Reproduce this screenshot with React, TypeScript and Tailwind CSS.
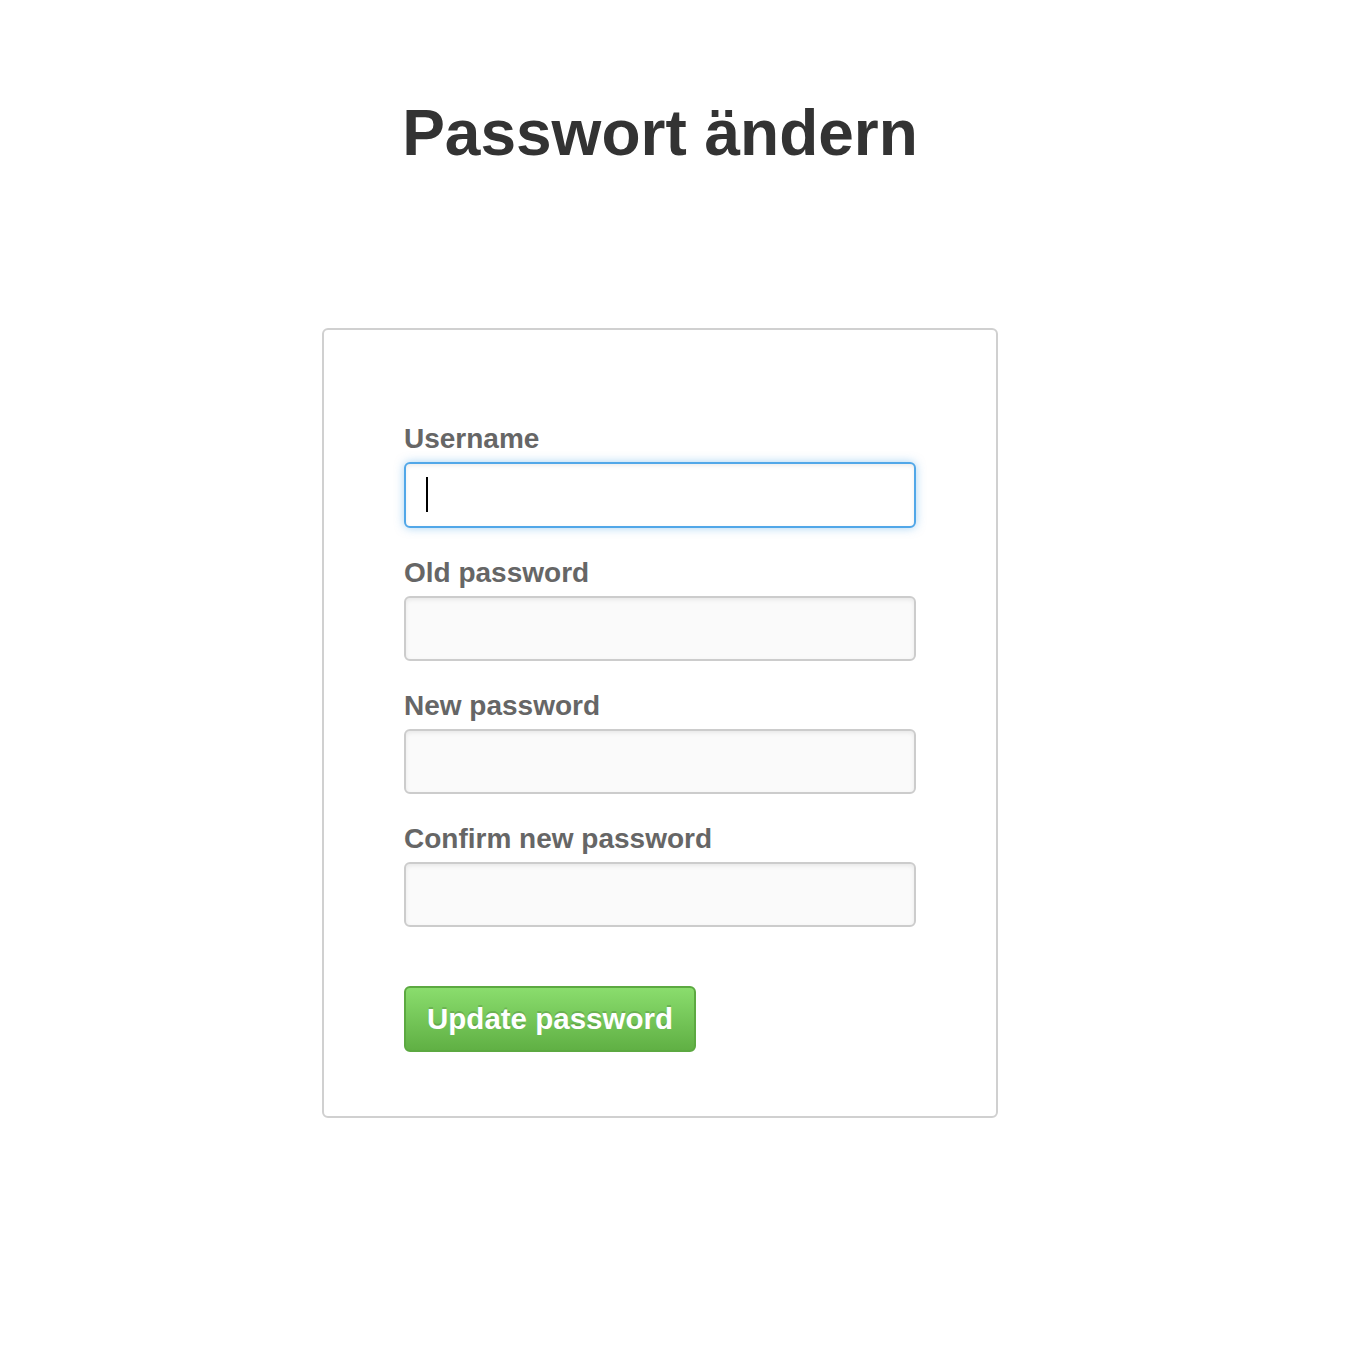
import React from 'react';

const fields = ['Username', 'Old password', 'New password', 'Confirm new password'];

function Field({ label, focused }: { label: string; focused?: boolean }) {
  return (
    <div className="flex flex-col">
      <label className="text-[28px] leading-[32px] font-bold text-[#666] mb-[7px]">{label}</label>
      <div className="relative">
        <input
          type={label === 'Username' ? 'text' : 'password'}
          className={
            focused
              ? 'w-[512px] h-[66px] rounded-[6px] border-2 border-[#51a7e8] bg-white outline-none shadow-[inset_0_2px_4px_rgba(0,0,0,0.075),0_0_10px_rgba(81,167,232,0.5)]'
              : 'w-[512px] h-[65px] rounded-[6px] border-2 border-[#cccccc] bg-[#fafafa] outline-none shadow-[inset_0_2px_4px_rgba(0,0,0,0.075)]'
          }
        />
        {focused && <span className="absolute left-[22px] top-[15px] w-[2px] h-[35px] bg-black" />}
      </div>
    </div>
  );
}

export default function App() {
  return (
    <div className="w-[1320px] min-h-[1360px] bg-white flex flex-col items-center font-['Liberation_Sans',Arial,sans-serif]">
      <h1 className="mt-[96px] text-[64px] leading-[74px] font-bold text-[#333]">Passwort ändern</h1>

      <div className="mt-[158px] w-[676px] border-2 border-[#d0d0d0] rounded-[6px] px-[80px] pt-[93px] pb-[64px] flex flex-col">
        <div className="flex flex-col gap-[29px]">
          {fields.map((f, i) => (
            <Field key={f} label={f} focused={i === 0} />
          ))}
        </div>

        <div className="mt-[59px]">
          <button className="h-[66px] w-[292px] rounded-[6px] border-2 border-[#5ca941] bg-gradient-to-b from-[#8add6d] to-[#60b044] text-white text-[29.5px] font-bold [text-shadow:0_-2px_0_rgba(0,0,0,0.15)]">
            Update password
          </button>
        </div>
      </div>
    </div>
  );
}
